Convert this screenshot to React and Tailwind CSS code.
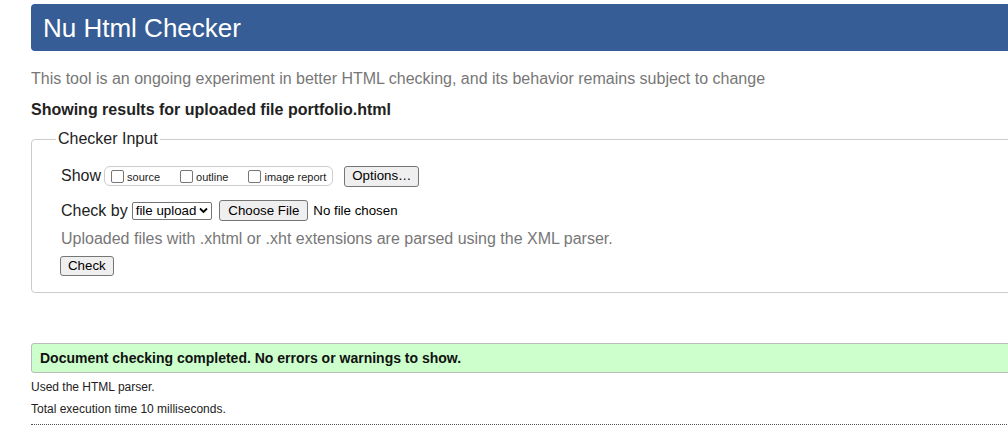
export default function App() {
  const btn = "inline-flex items-center bg-[#efefef] border border-[#767676] rounded-[3px] text-[13.3px] text-black leading-none";
  const cb = "inline-block w-[13px] h-[13px] border border-[#767676] rounded-[2px] bg-white mr-[3px] align-middle";
  return (
    <div className="w-[1008px] h-[435px] overflow-hidden bg-white font-['Liberation_Sans',Arial,sans-serif] text-[#222]">
      <div className="ml-[31px] w-[1100px] pt-[4px]">
        <div className="h-[47px] bg-[#365d95] rounded-[4px] flex items-center pl-[12px]">
          <h1 className="text-white text-[26px] leading-none">Nu Html Checker</h1>
        </div>
        <p className="mt-[19px] text-[16px] leading-[18px] text-[#777]">This tool is an ongoing experiment in better HTML checking, and its behavior remains subject to change</p>
        <p className="mt-[13px] text-[16px] leading-[18px] font-bold text-[#222]">Showing results for uploaded file portfolio.html</p>
        <fieldset className="mt-[11px] border border-[#ccc] rounded-[4px] pl-[29px] pb-[15px] pt-[6px]">
          <legend className="ml-[-5px] px-[2px] text-[16px] leading-[18px] text-[#222]">Checker Input</legend>
          <div className="flex items-center h-[20px] mt-[12px]">
            <span className="text-[16px] mr-[3px]">Show</span>
            <div className="flex items-center h-[20px] border border-[#ccc] rounded-[6px] pl-[6px] pr-[6px] text-[11px]">
              <span className={cb}></span><span className="mr-[20px] mt-[3px]">source</span>
              <span className={cb}></span><span className="mr-[20px] mt-[3px]">outline</span>
              <span className={cb}></span><span className="mt-[3px]">image report</span>
            </div>
            <span className={btn + " ml-[11px] h-[21px] px-[7px]"}>Options…</span>
          </div>
          <div className="flex items-center h-[21px] mt-[14px]">
            <span className="text-[16px] mr-[4px]">Check by</span>
            <span className="inline-flex items-center h-[18px] border border-[#767676] rounded-[2px] px-[3px] text-[13.3px] text-black gap-[3px]">
              file upload
              <svg width="9" height="7" viewBox="0 0 9 7"><path d="M1 1.5 L4.5 5 L8 1.5" stroke="#000" strokeWidth="1.8" fill="none" /></svg>
            </span>
            <span className={btn + " ml-[7px] h-[21px] px-[8px]"}>Choose File</span>
            <span className="ml-[5px] text-[13.3px] text-black">No file chosen</span>
          </div>
          <p className="mt-[9px] text-[16px] leading-[18px] text-[#777]">Uploaded files with .xhtml or .xht extensions are parsed using the XML parser.</p>
          <div className="mt-[5px] -ml-[1px]">
            <span className={btn + " h-[20px] px-[7px]"}>Check</span>
          </div>
        </fieldset>
        <div className="mt-[50px] h-[30px] bg-[#ccffcc] border border-[#bbb] rounded-[3px] flex items-center pl-[8px]">
          <span className="font-bold text-[14px] text-[#111]">Document checking completed. No errors or warnings to show.</span>
        </div>
        <p className="mt-[7px] text-[12px] leading-[14px] text-[#222]">Used the HTML parser.</p>
        <p className="mt-[8px] text-[12px] leading-[14px] text-[#222]">Total execution time 10 milliseconds.</p>
        <div className="mt-[8px] border-t border-dotted border-[#555]"></div>
      </div>
    </div>
  );
}
